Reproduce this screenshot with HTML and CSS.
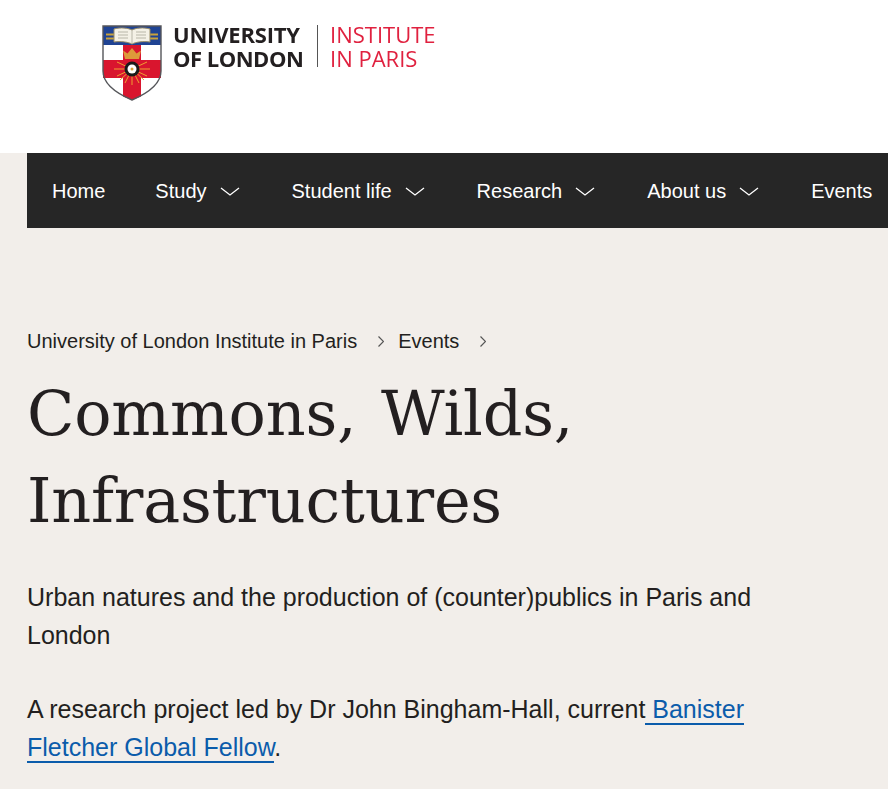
FILE: index.html
```html
<!DOCTYPE html>
<html lang="en">
<head>
    <meta charset="UTF-8">
    <meta name="viewport" content="width=device-width, initial-scale=1.0">
    <title>Commons, Wilds, Infrastructures</title>
    <link rel="stylesheet" href="styles.css">
</head>
<body>
    <header class="masthead">
        <a class="logo" href="#">
            <svg class="crest" viewBox="0 0 60 77" width="60" height="77" aria-hidden="true">
                <path d="M1 1H59V46C59 60 44 69 30 75C16 69 1 60 1 46Z" fill="#fff"/>
                <path d="M1 1H59V20H1Z" fill="#1f4393"/>
                <path d="M21 20H39V71.5L30 75L21 71.5Z" fill="#d9152e"/>
                <path d="M1 35H59V53H1Z" fill="#d9152e"/>
                <path d="M4 8.5H14V10.5H4ZM4 12.5H14V14.5H4ZM46 8.5H56V10.5H46ZM46 12.5H56V14.5H46Z" fill="#c9a23c"/>
                <path d="M12 4C19 2 26 3 30 5C34 3 41 2 48 4V17C41 16 34 17 30 19C26 17 19 16 12 17Z" fill="#f4f1e6" stroke="#9a8c64" stroke-width="1"/>
                <path d="M30 5V19M16 7H26M16 10H26M16 13H26M34 7H44M34 10H44M34 13H44" stroke="#b8b6a8" stroke-width="1" fill="none"/>
                <path d="M23 34L21 25.5L25.5 28.5L30 23L34.5 28.5L39 25.5L37 34Z" fill="#dd9a3a"/>
                <g stroke="#f0a030" stroke-width="1">
                    <path d="M30 44L12 44M30 44L48 44M30 44L15 37M30 44L45 37M30 44L15 51M30 44L45 51M30 44L30 60M30 44L23 58M30 44L37 58M30 44L18 55M30 44L42 55"/>
                </g>
                <circle cx="30" cy="44" r="7.5" fill="#1b1b1b"/>
                <circle cx="30" cy="44" r="4.5" fill="#fff"/>
                <circle cx="30" cy="44" r="1.5" fill="#d8a23a"/>
                <path d="M1 1H59V46C59 60 44 69 30 75C16 69 1 60 1 46Z" fill="none" stroke="#55565a" stroke-width="1.4"/>
            </svg>
            <span class="logo-uni">UNIVERSITY<br>OF LONDON</span>
            <span class="logo-rule"></span>
            <span class="logo-inst">INSTITUTE<br>IN PARIS</span>
        </a>
    </header>

    <nav class="main-nav">
        <a href="#">Home</a>
        <a href="#">Study <svg class="chev" viewBox="0 0 20 10" width="20" height="10"><path d="M1 1L10 8L19 1"/></svg></a>
        <a href="#">Student life <svg class="chev" viewBox="0 0 20 10" width="20" height="10"><path d="M1 1L10 8L19 1"/></svg></a>
        <a href="#">Research <svg class="chev" viewBox="0 0 20 10" width="20" height="10"><path d="M1 1L10 8L19 1"/></svg></a>
        <a href="#">About us <svg class="chev" viewBox="0 0 20 10" width="20" height="10"><path d="M1 1L10 8L19 1"/></svg></a>
        <a href="#">Events</a>
    </nav>

    <main class="content">
        <div class="breadcrumb">
            <a href="#">University of London Institute in Paris</a>
            <svg class="crumb-sep" viewBox="0 0 6 11" width="6" height="11"><path d="M0.5 0.5L5.5 5.5L0.5 10.5"/></svg>
            <a href="#">Events</a>
            <svg class="crumb-sep" viewBox="0 0 6 11" width="6" height="11"><path d="M0.5 0.5L5.5 5.5L0.5 10.5"/></svg>
        </div>
        <h1>Commons, Wilds, Infrastructures</h1>
        <p>Urban natures and the production of (counter)publics in Paris and London</p>
        <p>A research project led by Dr John Bingham-Hall, current<a class="link" href="#"> Banister Fletcher Global Fellow</a>.</p>
    </main>
</body>
</html>
```

FILE: styles.css
```css
html, body {
    height: 789px;
    overflow: hidden;
}
body {
    margin: 0;
    font-family: "Liberation Sans", Arial, sans-serif;
    color: #231f20;
    background-color: #f2eeea;
}
.masthead {
    height: 153px;
    background-color: #fff;
    padding-left: 102px;
    box-sizing: border-box;
}
.logo {
    display: flex;
    align-items: flex-start;
    padding-top: 25px;
    text-decoration: none;
    filter: blur(0.3px);
}
.crest {
    flex: none;
}
.logo-uni {
    margin: -3px 0 0 11px;
    font-family: "Open Sans", sans-serif;
    font-weight: 700;
    font-size: 22px;
    line-height: 24px;
    letter-spacing: -0.5px;
    color: #231f20;
}
.logo-uni::first-line {
    letter-spacing: -0.2px;
}
.logo-rule {
    width: 1px;
    height: 42px;
    margin: 0 12px 0 11px;
    background-color: #555;
}
.logo-inst {
    margin-top: -3px;
    font-family: "Open Sans", sans-serif;
    font-size: 22px;
    line-height: 24px;
    color: #e0213f;
}
.main-nav {
    display: flex;
    align-items: center;
    height: 75px;
    margin-left: 27px;
    padding: 2px 0 0 25px;
    box-sizing: border-box;
    gap: 50px;
    background-color: #262626;
    white-space: nowrap;
    overflow: hidden;
}
.main-nav a {
    display: flex;
    align-items: center;
    gap: 13px;
    font-size: 20px;
    color: #fff;
    text-decoration: none;
}
.chev {
    flex: none;
    margin-right: 2px;
}
.chev path {
    fill: none;
    stroke: #fff;
    stroke-width: 1.3;
}
.content {
    padding: 100px 27px 0;
}
.breadcrumb {
    display: flex;
    align-items: center;
    font-size: 20px;
    line-height: 26px;
}
.breadcrumb a {
    color: #231f20;
    text-decoration: none;
}
.crumb-sep {
    margin: 0 14px 0 21px;
}
.crumb-sep path {
    fill: none;
    stroke: #555;
    stroke-width: 1.2;
}
h1 {
    margin: 16px 0 0;
    max-width: 640px;
    font-family: "DejaVu Serif", serif;
    font-weight: 400;
    font-size: 62px;
    line-height: 87px;
    letter-spacing: -0.2px;
    word-spacing: 5px;
    color: #231f20;
}
h1 + p {
    margin-top: 34px;
}
p {
    margin: 36px 0 0;
    max-width: 760px;
    font-size: 25px;
    line-height: 38px;
}
.link {
    color: #0b5cab;
    text-decoration: none;
    border-bottom: 2px solid #0b5cab;
}
```
